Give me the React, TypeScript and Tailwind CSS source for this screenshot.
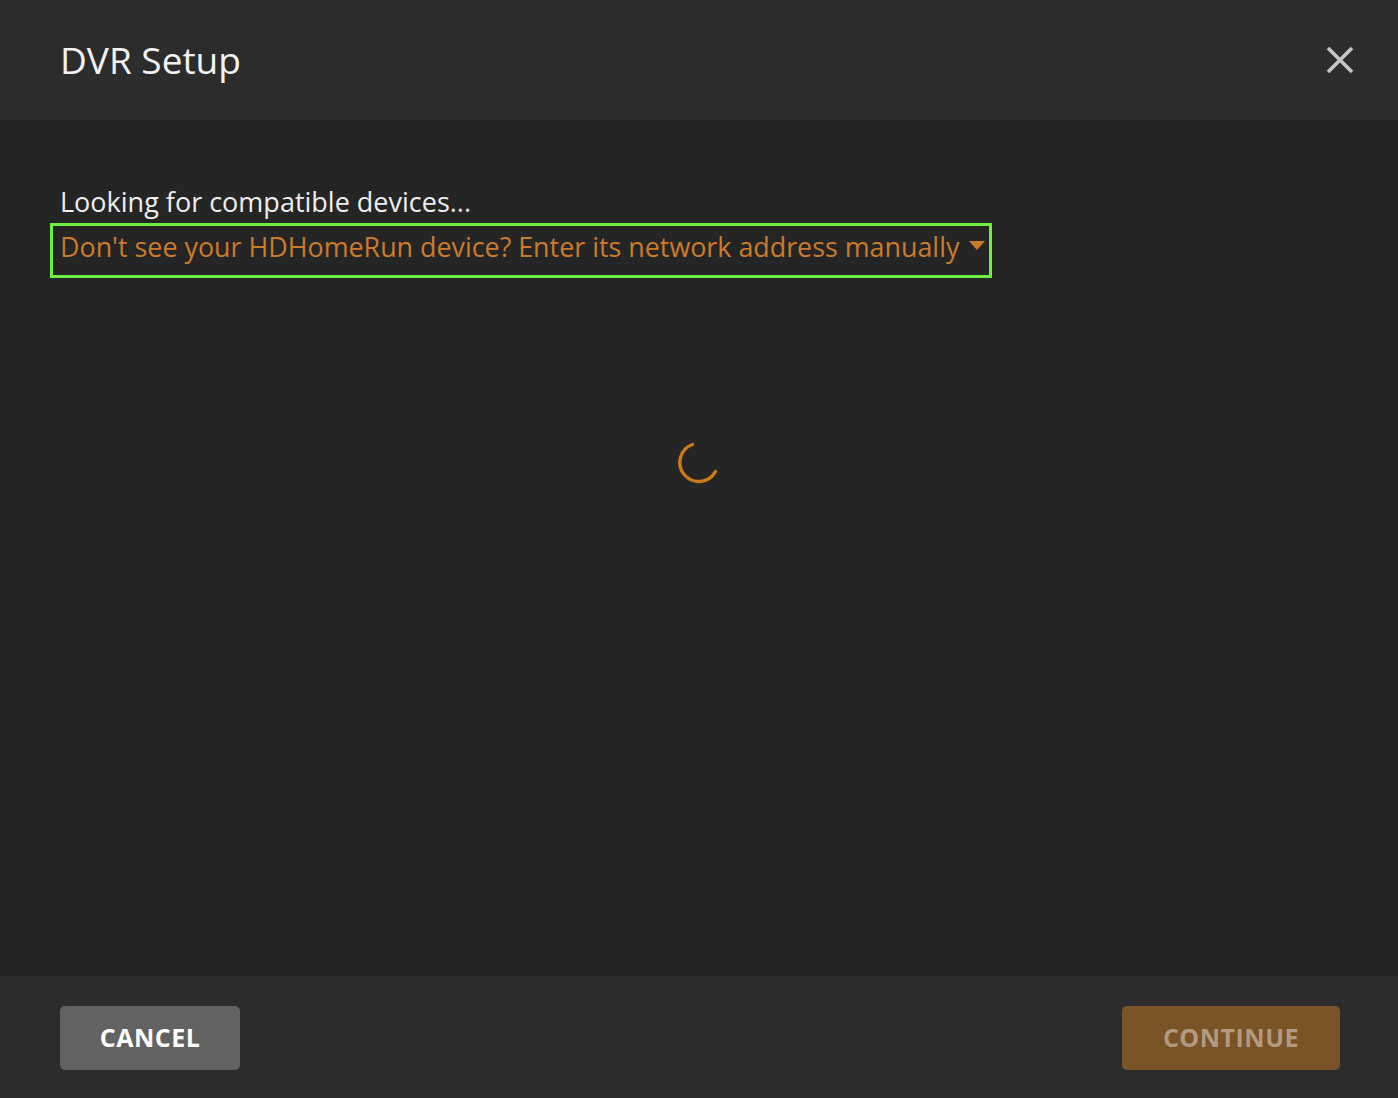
import React from "react";

function Spinner() {
  return (
    <svg width="48" height="48" viewBox="0 0 48 48" className="block">
      <path
        d="M17.5 6.5 A19 19 0 1 0 40.5 33.5"
        fill="none"
        stroke="#cc7b19"
        strokeWidth="3.4"
        strokeLinecap="round"
      />
    </svg>
  );
}

export default function App() {
  return (
    <div
      className="h-[1098px] w-full flex flex-col text-white"
      style={{ fontFamily: '"Open Sans", "Noto Sans", sans-serif' }}
    >
      <header className="h-[120px] shrink-0 bg-[#2c2c2c] flex items-center justify-between pl-[60px] pr-[42px]">
        <h1 className="text-[37px] font-normal text-[#f2f2f2] leading-none -mt-[1px]">DVR Setup</h1>
        <button type="button" className="w-[32px] h-[32px] flex items-center justify-center">
          <svg width="30" height="30" viewBox="0 0 30 30">
            <path d="M3 3 L27 27 M27 3 L3 27" stroke="#c6c6c6" strokeWidth="3.6" />
          </svg>
        </button>
      </header>

      <main className="flex-1 bg-[#252525] flex flex-col pt-[64px]">
        <div className="px-[60px]">
          <p className="text-[27px] leading-[36px] text-[#eeeeee]">Looking for compatible devices...</p>
        </div>
        <div className="pl-[50px] mt-[3px]">
          <button
            type="button"
            className="inline-flex items-center gap-[10px] border-[3px] border-[#6ef043] pl-[7px] pr-[4px] h-[55px] text-[26.85px] text-[#cc7b2b]"
          >
            <span className="-mt-[7px]">Don't see your HDHomeRun device? Enter its network address manually</span>
            <svg width="16" height="10" viewBox="0 0 16 10" className="-mt-[10px]">
              <path d="M0 0 L16 0 L8 9 Z" fill="#cc7b2b" />
            </svg>
          </button>
        </div>
        <div className="flex justify-center mt-[160px]">
          <Spinner />
        </div>
      </main>

      <footer className="h-[122px] shrink-0 bg-[#2c2c2c] flex items-center justify-between px-[58px] pt-[2px]">
        <button
          type="button"
          className="w-[180px] h-[64px] ml-[2px] rounded-[5px] bg-[#626262] text-white text-[25px] font-bold tracking-[0.5px] uppercase"
        >
          Cancel
        </button>
        <button
          type="button"
          className="w-[218px] h-[64px] rounded-[5px] bg-[#7a5326] text-[#b29a80] text-[25px] font-bold tracking-[0.5px] uppercase"
        >
          Continue
        </button>
      </footer>
    </div>
  );
}
